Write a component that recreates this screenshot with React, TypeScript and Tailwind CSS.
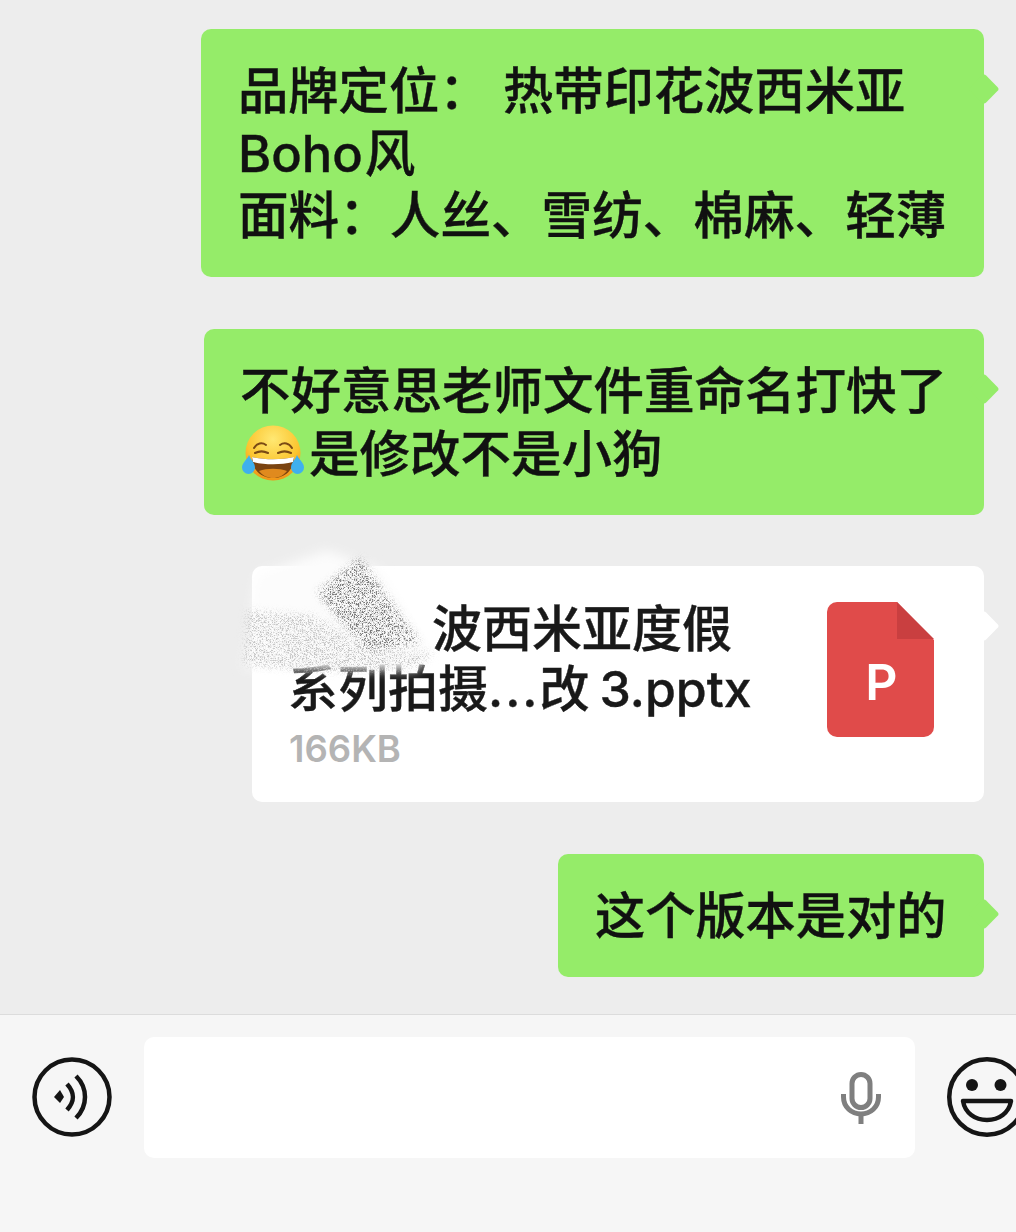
import React from 'react'

const fontStack = "font-['Inter','Noto_Sans_CJK_SC',sans-serif]"

function Tail({ color }: { color: string }) {
  return <div className={`absolute -right-[11px] top-[49px] h-[22px] w-[22px] rotate-45 rounded-[3px] ${color}`} />
}

function Bubble({ className, children }: { className: string; children: React.ReactNode }) {
  return (
    <div className={`relative shrink-0 rounded-[10px] bg-[#95ec69] pb-[30px] pt-[31px] font-medium leading-[62.5px] text-[#111] [-webkit-text-stroke:0.4px_#111] ${className}`}>
      {children}
      <Tail color="bg-[#95ec69]" />
    </div>
  )
}

function LaughEmoji() {
  return (
    <svg viewBox="0 0 62 58" className="ml-[2px] mr-[5px] inline-block h-[58px] w-[62px] align-[-10px]">
      <defs>
        <radialGradient id="face" cx="50%" cy="25%" r="80%">
          <stop offset="0%" stopColor="#ffe873" />
          <stop offset="60%" stopColor="#fbc52f" />
          <stop offset="100%" stopColor="#ee8a12" />
        </radialGradient>
      </defs>
      <circle cx="31" cy="29" r="27.5" fill="url(#face)" />
      <path d="M12 24c3-5 8-6 12-3M50 24c-3-5-8-6-12-3" fill="none" stroke="#7a4a14" strokeWidth="2" strokeLinecap="round" />
      <path d="M13 29c4-2 9-2 13 0M49 29c-4-2-9-2-13 0" fill="none" stroke="#7a4a14" strokeWidth="2" strokeLinecap="round" />
      <path d="M10 33c13 3 29 3 42 0c0 13-9 21-21 21s-21-8-21-21z" fill="#7a4310" />
      <path d="M10 33c13 3 29 3 42 0l-1 5c-12 3-28 3-40 0z" fill="#fff" />
      <path d="M17 47c8-3 20-3 28 0c-4 5-9 7-14 7s-10-2-14-7z" fill="#e08a1e" />
      <path d="M7 31c2 5 6 8 6 12.500a6.500 6.500 0 0 1-13 0c0-4.500 5-8 7-12.500z" fill="#3fb0ee" />
      <path d="M55 31c-2 5-6 8-6 12.500a6.500 6.500 0 0 0 13 0c0-4.500-5-8-7-12.500z" fill="#3fb0ee" />
    </svg>
  )
}

function Smudge() {
  return (
    <svg viewBox="0 0 220 150" className="absolute -left-[22px] -top-[26px] h-[150px] w-[220px]">
      <defs>
        <filter id="haze" x="-20%" y="-20%" width="140%" height="140%">
          <feGaussianBlur stdDeviation="6" />
        </filter>
        <filter id="grain" x="-20%" y="-20%" width="140%" height="140%">
          <feTurbulence type="fractalNoise" baseFrequency="1.5" numOctaves="2" seed="4" result="n" />
          <feColorMatrix in="n" type="matrix" values="0 0 0 0 0  0 0 0 0 0  0 0 0 0 0  6 0 0 0 -2.800" result="t" />
          <feGaussianBlur in="SourceGraphic" stdDeviation="3.500" result="b" />
          <feComposite in="b" in2="t" operator="in" />
        </filter>
      </defs>
      <polygon points="28,35 97,10 150,30 200,113 188,130 14,128" fill="#fcfcfc" filter="url(#haze)" />
      <polygon points="16,70 85,75 140,112 205,112 185,128 100,132 14,125" fill="#c8c8c8" filter="url(#grain)" />
      <polygon points="130,18 190,103 137,113 87,52" fill="#7c7c7c" filter="url(#grain)" />
    </svg>
  )
}

function FileCard() {
  return (
    <div className="relative mt-[51px] flex h-[236px] w-[732px] shrink-0 justify-between rounded-[10px] bg-white pl-[37px] pr-[50px]">
      <div className="pt-[33px]">
        <p className="pl-[143px] text-[50px] font-medium leading-[60px] text-[#191919] [-webkit-text-stroke:0.4px_#191919]">波西米亚度假</p>
        <p className="text-[50px] font-medium leading-[60px] text-[#191919] [-webkit-text-stroke:0.4px_#191919]">
          <span className="-ml-[1px]">系列拍摄</span>
          <span className="tracking-[2px]">...</span>改<span className="ml-[10px]">3.pptx</span>
        </p>
        <p className="mt-[10px] text-[36.500px] font-semibold leading-[40px] text-[#b4b4b4]">166KB</p>
      </div>
      <div className="relative mt-[36px] flex h-[135px] w-[107px] shrink-0 items-center justify-center pl-[2px] pt-[25px]">
        <svg viewBox="0 0 107 135" className="absolute inset-0 h-full w-full">
          <path d="M10 0H70L107 38V125a10 10 0 0 1-10 10H10a10 10 0 0 1-10-10V10A10 10 0 0 1 10 0z" fill="#e04b4a" />
          <path d="M70 0L107 37H70z" fill="#c93f40" />
        </svg>
        <span className="relative text-[50px] font-semibold leading-none text-white">P</span>
      </div>
      <Tail color="bg-white" />
      <Smudge />
    </div>
  )
}

export default function App() {
  return (
    <div className={`flex h-[1232px] w-[1016px] flex-col overflow-hidden bg-[#ededed] ${fontStack}`}>
      <div className="flex h-[1014px] shrink-0 flex-col items-end pr-[32px] pt-[29px]">
        <Bubble className="h-[248px] w-[783px] pl-[37px] text-[50.600px]">
          <p className="whitespace-pre text-[50.300px]">品牌定位： 热带印花波西米亚</p>
          <p>Boho<span className="ml-[2px]">风</span></p>
          <p>面料：人丝、雪纺、棉麻、轻薄</p>
        </Bubble>
        <Bubble className="mt-[52px] h-[186px] w-[780px] pl-[36px] text-[50.500px]">
          <p>不好意思老师文件重命名打快了</p>
          <p><LaughEmoji />是修改不是小狗</p>
        </Bubble>
        <FileCard />
        <Bubble className="mt-[52px] h-[123px] w-[426px] pl-[37px] text-[50.200px]">
          <p>这个版本是对的</p>
        </Bubble>
      </div>

      <div className="flex flex-1 items-start gap-[32px] border-t border-[#dcdcdc] bg-[#f6f6f6] pl-[32px] pt-[22px]">
        <svg viewBox="0 0 80 80" className="mt-[20px] h-[80px] w-[80px] shrink-0 fill-none stroke-[#151515]">
          <circle cx="40" cy="40" r="37.500" strokeWidth="4.500" />
          <path d="M22 40L28 33L32 40L28 46z" fill="#151515" stroke="none" />
          <path d="M35 27C43 36 43 44 35 53" strokeWidth="4.500" />
          <path d="M44 19C56 31 56 49 44 61" strokeWidth="4.500" />
        </svg>

        <div className="flex h-[121px] w-[771px] shrink-0 items-center justify-end rounded-[10px] bg-white pr-[34px]">
          <svg viewBox="0 0 40 52" className="h-[52px] w-[40px] fill-none stroke-[#7f7f7f]" strokeWidth="5">
            <rect x="11" y="2.500" width="18" height="33" rx="9" />
            <path d="M2.500 22v3c0 10 8 17 17.500 17s17.500-7 17.500-17v-3" />
            <path d="M20 42v10" />
          </svg>
        </div>

        <svg viewBox="0 0 80 80" className="mt-[20px] h-[80px] w-[80px] shrink-0 fill-none stroke-[#151515]" strokeWidth="4.500">
          <circle cx="40" cy="40" r="37.750" />
          <circle cx="25" cy="28" r="6" fill="#151515" stroke="none" />
          <circle cx="53.500" cy="28" r="6" fill="#151515" stroke="none" />
          <path d="M16 44H64C62 56 52 63 40 63C28 63 18 56 16 44Z" strokeLinejoin="round" />
        </svg>
      </div>
    </div>
  )
}
